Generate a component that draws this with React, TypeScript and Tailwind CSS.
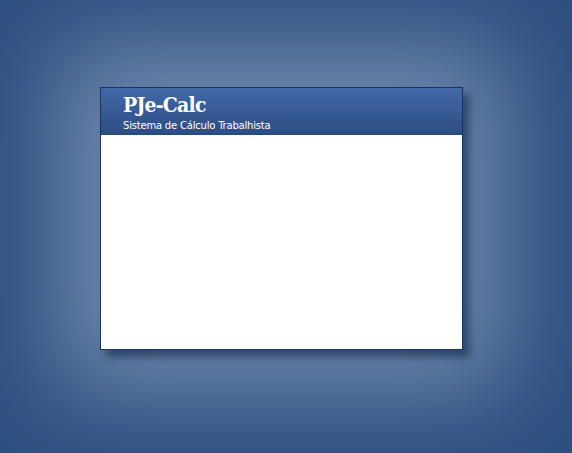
export default function App() {
  return (
    <div className="w-[572px] h-[453px] bg-[#2e5081] pl-[100px] pt-[87px] overflow-hidden">
      <div className="w-[363px] h-[263px] flex flex-col border border-[#1c3461] bg-white shadow-[6px_7px_8px_rgba(10,25,60,0.55),0_0_90px_40px_rgba(170,185,210,0.55)]">
        <div className="h-[47px] shrink-0 bg-gradient-to-b from-[#4169a8] to-[#2d4d84] pl-[22px] pt-[5px] border-b border-[#2a4676]">
          <div className="text-white font-bold text-[21px] leading-[24px] tracking-[-0.8px] [font-family:'DejaVu_Serif_Condensed','DejaVu_Serif',serif]">
            PJe-Calc
          </div>
          <div className="mt-[2px] text-white text-[10px] leading-[13px] tracking-[-0.2px] [font-family:'DejaVu_Sans','Open_Sans',sans-serif]">
            Sistema de Cálculo Trabalhista
          </div>
        </div>
        <div className="flex-1 bg-white" />
      </div>
    </div>
  );
}
